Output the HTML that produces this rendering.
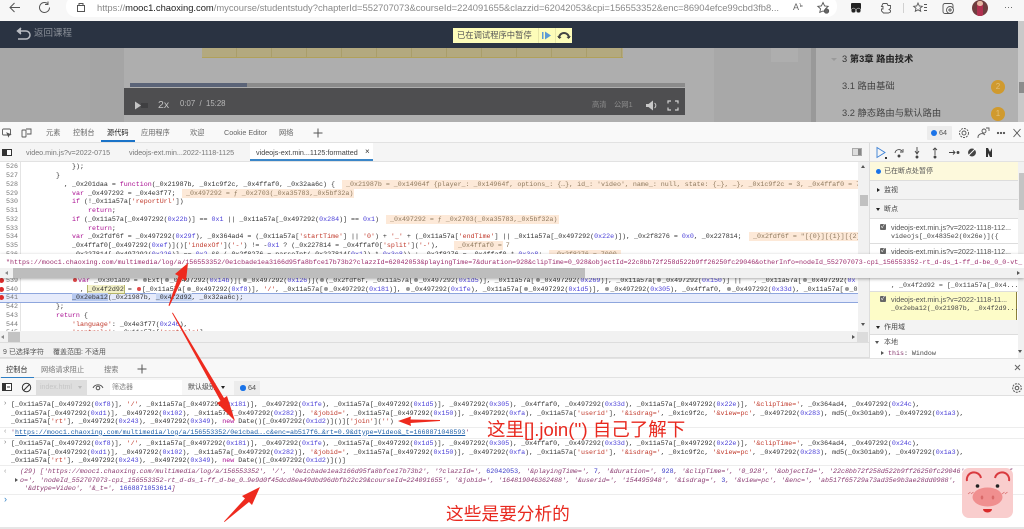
<!DOCTYPE html>
<html lang="zh">
<head>
<meta charset="utf-8">
<title>DevTools</title>
<style>
html,body{margin:0;padding:0;width:1024px;height:529px;overflow:hidden;background:#fff}
body{position:relative;font-family:"Liberation Sans","Noto Sans CJK SC",sans-serif;color:#444}
.a{position:absolute}
.t{position:absolute;white-space:pre;line-height:1}
.m{font-family:"Liberation Mono","Noto Sans CJK SC",monospace;font-size:6.65px;color:#333}
#wrap{position:absolute;left:0;top:0;width:1024px;height:529px;filter:blur(.3px)}
.l{position:absolute;left:0;width:858px;height:9px;line-height:9px;white-space:pre;overflow:hidden;font-family:"Liberation Mono","Noto Sans CJK SC",monospace;font-size:6.65px;color:#333}
.l span.c{position:absolute;top:0}
.num{position:absolute;left:0;width:18px;text-align:right;color:#777;font-family:"Liberation Mono",monospace;font-size:6.65px;height:9px;line-height:9px}
i{font-style:normal}
.k{color:#a90d91}.s{color:#c0392b}.n{color:#4a3fd8}
.v{position:absolute;top:0;background:#fde9d8;color:#8f7a5f;height:9px;white-space:pre}
.d{display:inline-block;width:4px;height:4px;border-radius:50%;background:#999;vertical-align:0;margin:0 1px}
.r{background:#e04a4a}
.bp{position:absolute;left:-1px;width:5px;height:5px;border-radius:50%;background:#dd2c2c}
.cl{position:absolute;left:11px;height:9px;line-height:9px;white-space:pre;font-family:"Liberation Mono",monospace;font-size:6.65px;color:#333;width:1013px;overflow:hidden}
.it{font-style:italic;color:#8a3a70}
.it .n{color:#3a3ac8}
.sbt{position:absolute;left:870px;width:148px;font-size:7px;color:#444;box-sizing:border-box;border-bottom:1px solid #ddd}
.cb{position:absolute;left:880px;width:6px;height:6px;background:#666;border-radius:1px;color:#fff;font-size:6px;line-height:6px;text-align:center}
.st{position:absolute;left:891px;width:126px;overflow:hidden;white-space:pre;font-size:7.2px;color:#555;height:9px;line-height:9px}
.sm{font-family:"Liberation Mono",monospace;font-size:6.65px;color:#444}
.tab{position:absolute;font-size:7.2px;color:#666;white-space:pre;line-height:1}
</style>
</head>
<body>
<div id="wrap">

<!-- browser chrome -->
<div class="a" style="left:0;top:0;width:1024px;height:21px;background:#f7f7f7"></div>
<div class="a" style="left:66px;top:-4px;width:771px;height:21px;background:#fff;border-radius:10px"></div>
<svg class="a" style="left:0;top:0" width="90" height="20" fill="none" stroke="#555" stroke-width="1">
  <path d="M20 7.5H10.5M14.5 3L10 7.5l4.500 4.500"/>
  <path d="M49.500 7.500a5 5 0 1 1-2-4"/><path d="M48 1.500v3h-3"/>
  <rect x="77.500" y="5.500" width="7" height="6"/><path d="M79 5.500v-2h4v2"/>
</svg>
<div class="t" style="left:97px;top:2px;font-size:9.4px;color:#888;width:690px;overflow:hidden;line-height:11px">https://<span style="color:#222">mooc1.chaoxing.com</span>/mycourse/studentstudy?chapterId=552707073&amp;courseId=224091655&amp;clazzid=62042053&amp;cpi=156553352&amp;enc=86904efce99cbd3fb8...</div>
<div class="t" style="left:793px;top:3px;font-size:9px;color:#666">A<span style="font-size:6px;vertical-align:3px">ъ</span></div>
<svg class="a" style="left:815px;top:0" width="160" height="20" fill="none" stroke="#555" stroke-width=".9">
  <path d="M8 2.500l1.600 3.400 3.600.4-2.700 2.500.7 3.600L8 11l-3.200 1.400.7-3.600L2.800 6.300l3.600-.4z"/>
  <circle cx="11.500" cy="11" r="2.200" fill="#666"/>
  <rect x="36" y="3" width="10" height="7" rx="1" fill="#222" stroke="none"/><circle cx="38.500" cy="10.500" r="2.400" fill="#222" stroke="#fff" stroke-width=".5"/><circle cx="43.500" cy="10.500" r="2.400" fill="#222" stroke="#fff" stroke-width=".5"/>
  <path d="M68 3.500h4l1 2h2.500v3l-1.500 1 1.500 1v1.500l-2 1h-5l-2-2v-2h1.500v-2.500h-1.500z"/>
  <path d="M88.500 3v10" stroke="#ccc"/>
  <path d="M103 3l1.300 3 3 .3-2.300 2 .7 3-2.700-1.500-2.700 1.500.7-3-2.300-2 3-.3z"/><path d="M109 4.500h3M109 7.500h3M109 10.500h3"/>
  <rect x="128" y="3.500" width="10" height="10" rx="2"/><circle cx="135" cy="10" r="3.500" fill="#f7f7f7"/><path d="M135 8v4M133 10h4"/>
</svg>
<div class="a" style="left:972px;top:0;width:16px;height:16px;border-radius:50%;background:#6f3d3f;overflow:hidden"><div class="a" style="left:5px;top:3px;width:6px;height:13px;background:#b03050"></div><div class="a" style="left:5px;top:1px;width:6px;height:5px;border-radius:3px;background:#e6b9a5"></div></div>
<div class="t" style="left:1004px;top:3px;font-size:9px;color:#555">···</div>

<!-- dim page -->
<div class="a" style="left:0;top:21px;width:1024px;height:101px;background:#a9a9a9"></div>
<div class="a" style="left:0;top:21px;width:1018px;height:27px;background:#2a3342"></div>
<div class="a" style="left:1018px;top:21px;width:6px;height:101px;background:#c9c9c9"></div>
<div class="a" style="left:1019px;top:82px;width:5px;height:11px;background:#8c8c8c"></div>
<svg class="a" style="left:15px;top:27px" width="16" height="14" fill="none" stroke="#b9bcc2" stroke-width="1.500"><path d="M5 4h6a3.500 3.500 0 0 1 0 8H3"/><path d="M6 1L2.500 4 6 7" fill="#b9bcc2"/></svg>
<div class="t" style="left:34px;top:29px;font-size:9.500px;color:#8a8f98">返回课程</div>
<div class="a" style="left:453px;top:28px;width:119px;height:14.500px;background:#fdfcb9"></div>
<div class="t" style="left:457px;top:31px;font-size:8.300px;color:#555">已在调试程序中暂停</div>
<svg class="a" style="left:538px;top:28px" width="34" height="15"><path d="M.5 0v15M17.500 0v15" stroke="#e8e6a8"/><rect x="4" y="4" width="1.500" height="7" fill="#5b9bd5"/><path d="M7 3.500L13 7.500 7 11.500z" fill="#5b9bd5"/><path d="M21 10a5 5 0 0 1 10 0" fill="none" stroke="#444" stroke-width="2"/><path d="M19 8l2.500 3 2-2zM33 8l-2.500 3-2-2z" fill="#444"/></svg>
<!-- page columns -->
<div class="a" style="left:90px;top:48px;width:34px;height:74px;background:#a5a5a5"></div>
<div class="a" style="left:0;top:48px;width:90px;height:74px;background:#a7a7a7"></div>
<div class="a" style="left:124px;top:48px;width:590px;height:74px;background:#aeaeae"></div>
<div class="a" style="left:714px;top:48px;width:98px;height:74px;background:#a8a8a8"></div>
<div class="a" style="left:771px;top:48px;width:27px;height:14px;background:#aeaeae"></div>
<div class="a" style="left:811px;top:48px;width:5px;height:74px;background:#999"></div>
<div class="a" style="left:816px;top:48px;width:202px;height:74px;background:#b1b1b1"></div>
<!-- gold strip -->
<div class="a" style="left:202px;top:48px;width:421px;height:10px;background:repeating-linear-gradient(90deg,#b3a97f 0 34px,#a99e6a 34px 35px);border-bottom:1px solid #b1a15a;box-sizing:border-box"></div>
<!-- video bar -->
<div class="a" style="left:130px;top:83px;width:555px;height:4px;background:#8b8b8b"></div>
<div class="a" style="left:130px;top:83px;width:117px;height:4px;background:#5b6478"></div>
<div class="a" style="left:124px;top:88px;width:561px;height:27px;background:#4e4e50"></div>
<svg class="a" style="left:134px;top:100px" width="16" height="11"><path d="M1 1.500L7 5.500 1 9.500z" fill="#c4c4c4"/><rect x="7" y="3" width="7" height="5" fill="#3f3f41"/></svg>
<div class="t" style="left:158px;top:100px;font-size:10.500px;color:#c4c4c4">2x</div>
<div class="t" style="left:180px;top:100px;font-size:7.800px;color:#b9b9b9">0:07  /  15:28</div>
<div class="t" style="left:592px;top:101px;font-size:7.300px;color:#8c8c8c">高清</div>
<div class="t" style="left:614px;top:101px;font-size:7.300px;color:#8c8c8c">公网1</div>
<svg class="a" style="left:645px;top:99px" width="26" height="13"><path d="M1 5h2.500L8 1.500v10L3.500 8H1z" fill="#c8c8c8"/><path d="M9.500 4a3 3 0 0 1 0 5" stroke="#c8c8c8" fill="none"/></svg>
<svg class="a" style="left:667px;top:100px" width="12" height="11" fill="none" stroke="#d0d0d0" stroke-width="1.200"><path d="M1 3.500V1h3M8 1h3v2.500M11 7.500V10H8M4 10H1V7.500"/></svg>
<!-- right list -->
<div class="a" style="left:831px;top:58px;border-left:3px solid transparent;border-right:3px solid transparent;border-top:3px solid #9a9a9a"></div>
<div class="t" style="left:842px;top:55px;font-size:9.300px;color:#333">3 <b style="color:#222">第3章 路由技术</b></div>
<div class="t" style="left:842px;top:82px;font-size:9.300px;color:#444">3.1 路由基础</div>
<div class="t" style="left:842px;top:109px;font-size:9.300px;color:#444">3.2 静态路由与默认路由</div>
<div class="a" style="left:991px;top:80px;width:14px;height:14px;border-radius:50%;background:#d09a2e;color:#e3c078;font-size:8px;line-height:14px;text-align:center">2</div>
<div class="a" style="left:991px;top:107px;width:14px;height:14px;border-radius:50%;background:#d09a2e;color:#e3c078;font-size:8px;line-height:14px;text-align:center">1</div>

<!-- devtools top tabs -->
<div class="a" style="left:0;top:122px;width:1024px;height:21px;background:#f9f9f9;border-bottom:1px solid #e2e2e2;box-sizing:border-box"></div>
<svg class="a" style="left:2px;top:127px" width="30" height="12" fill="none" stroke="#555" stroke-width=".9"><rect x=".5" y="2" width="8" height="6" rx="1"/><path d="M5 6l3.500 1.500-1.500.5-.5 1.500z" fill="#555"/><rect x="20" y="3" width="4" height="7" rx=".5"/><path d="M24 2h5v5h-4"/></svg>
<div class="tab" style="left:46px;top:129px">元素</div>
<div class="tab" style="left:73px;top:129px">控制台</div>
<div class="tab" style="left:107px;top:129px;color:#222">源代码</div>
<div class="a" style="left:101px;top:140px;width:34px;height:2px;background:#1a73c8"></div>
<div class="tab" style="left:141px;top:129px">应用程序</div>
<div class="tab" style="left:190px;top:129px">欢迎</div>
<div class="tab" style="left:224px;top:129px">Cookie Editor</div>
<div class="tab" style="left:279px;top:129px">网络</div>
<svg class="a" style="left:312px;top:127px" width="12" height="12"><path d="M6 1.500v9M1.500 6h9" stroke="#555"/></svg>
<div class="a" style="left:927px;top:126px;width:25px;height:14px;background:#ececec;border-radius:1px"></div>
<div class="a" style="left:931px;top:130px;width:6px;height:6px;border-radius:50%;background:#1a73e8"></div>
<div class="tab" style="left:939px;top:129px;color:#555">64</div>
<svg class="a" style="left:956px;top:125px" width="68" height="16" fill="none" stroke="#555" stroke-width=".9"><circle cx="8" cy="8" r="2"/><circle cx="8" cy="8" r="4.500" stroke-dasharray="2 1"/><circle cx="28" cy="6" r="2"/><path d="M22 13a4 4 0 0 1 7-3M30 3h3v3"/><circle cx="42" cy="8" r=".7" fill="#555"/><circle cx="45" cy="8" r=".7" fill="#555"/><circle cx="48" cy="8" r=".7" fill="#555"/><path d="M57.500 4l7 8M64.500 4l-7 8"/></svg>

<!-- source tabs -->
<div class="a" style="left:0;top:143px;width:1024px;height:19px;background:#f5f5f5;border-bottom:1px solid #e2e2e2;box-sizing:border-box"></div>
<div class="a" style="left:2px;top:149px;width:10px;height:7px;background:#333;border:1px solid #333;box-sizing:border-box"><div class="a" style="left:4px;top:0;width:4px;height:5px;background:#fff"></div></div>
<div class="tab" style="left:26px;top:149px;color:#777">video.min.js?v=2022-0715</div>
<div class="tab" style="left:129px;top:149px;color:#777">videojs-ext.min...2022-1118-1125</div>
<div class="a" style="left:250px;top:143px;width:123px;height:18px;background:#fff;border-bottom:2px solid #3b86c8;box-sizing:border-box"></div>
<div class="tab" style="left:256px;top:149px;color:#444">videojs-ext.min...1125:formatted</div>
<div class="tab" style="left:365px;top:148px;font-size:8px;color:#333">×</div>
<svg class="a" style="left:852px;top:148px" width="12" height="9"><rect x=".5" y=".5" width="9" height="7" fill="#ddd" stroke="#aaa"/><rect x="6" y="1" width="3" height="6" fill="#888"/></svg>
<svg class="a" style="left:875px;top:145px" width="145" height="15" fill="none" stroke="#444" stroke-width=".9">
  <path d="M2 2.500l8 5-8 5z" stroke="#3a7fd5"/><rect x="10" y="12" width="2" height="2" fill="#333" stroke="none"/>
  <path d="M20 8a4 4 0 0 1 7-2M28 4v3h-3"/><circle cx="24" cy="11" r="1" fill="#444"/>
  <path d="M42 2v7M40 6l2 3 2-3"/><circle cx="42" cy="12" r="1" fill="#444"/>
  <path d="M60 10V3M58 5l2-2 2 2"/><circle cx="60" cy="12" r="1" fill="#444"/>
  <path d="M74 7.500h6M78 5.500l2 2-2 2"/><circle cx="83" cy="7.500" r="1" fill="#444"/>
  <circle cx="97" cy="7.500" r="3.500" fill="#444"/><path d="M93 11l8-8" stroke="#fff"/>
  <path d="M111 3h2l2 4 2-4v9h-2l-2-4v4h-2z" fill="#333" stroke="none"/>
</svg>
<div class="a" style="left:869px;top:143px;width:1px;height:215px;background:#ddd"></div>

<!-- code -->
<div class="a" style="left:0;top:162px;width:858px;height:170px;background:#fff"></div>
<div class="a" style="left:20px;top:162px;width:1px;height:170px;background:#e4e4e4"></div>
<div class="a" style="left:0;top:293px;width:858px;height:10px;background:#e6ebfb;border-top:1px solid #8ea6dd;border-bottom:1px solid #8ea6dd;box-sizing:border-box"></div>

<div class="num" style="top:162px">526</div><div class="l" style="top:162px"><span class="c" style="left:72px">});</span></div>
<div class="num" style="top:171px">527</div><div class="l" style="top:171px"><span class="c" style="left:56px">}</span></div>
<div class="num" style="top:180px">528</div><div class="l" style="top:180px"><span class="c" style="left:64px">, _0x201daa = <i class="k">function</i>(_0x21987b, _0x1c9f2c, _0x4ffaf0, _0x32aa6c) {</span><span class="v" style="left:342px;width:516px"> _0x21987b = _0x14964f {player_: _0x14964f, options_: {…}, id_: 'video', name_: null, state: {…}, …}, _0x1c9f2c = 3, _0x4ffaf0 = 7</span></div>
<div class="num" style="top:188.500px">529</div><div class="l" style="top:188.500px"><span class="c" style="left:72px"><i class="k">var</i> _0x497292 = _0x4e3f77;</span><span class="v" style="left:182px;width:172px"> _0x497292 = ƒ _0x2703(_0xa35783,_0x5bf32a)</span></div>
<div class="num" style="top:197px">530</div><div class="l" style="top:197px"><span class="c" style="left:72px"><i class="k">if</i> (!_0x11a57a[<i class="s">'reportUrl'</i>])</span></div>
<div class="num" style="top:206px">531</div><div class="l" style="top:206px"><span class="c" style="left:88px"><i class="k">return</i>;</span></div>
<div class="num" style="top:214.500px">532</div><div class="l" style="top:214.500px"><span class="c" style="left:72px"><i class="k">if</i> (_0x11a57a[_0x497292(<i class="n">0x22b</i>)] == <i class="n">0x1</i> || _0x11a57a[_0x497292(<i class="n">0x284</i>)] == <i class="n">0x1</i>)</span><span class="v" style="left:386px;width:173px"> _0x497292 = ƒ _0x2703(_0xa35783,_0x5bf32a)</span></div>
<div class="num" style="top:223.500px">533</div><div class="l" style="top:223.500px"><span class="c" style="left:88px"><i class="k">return</i>;</span></div>
<div class="num" style="top:232px">534</div><div class="l" style="top:232px"><span class="c" style="left:72px"><i class="k">var</i> _0x2fdf6f = _0x497292(<i class="n">0x29f</i>), _0x364ad4 = (_0x11a57a[<i class="s">'startTime'</i>] || <i class="s">'0'</i>) + <i class="s">'_'</i> + (_0x11a57a[<i class="s">'endTime'</i>] || _0x11a57a[_0x497292(<i class="n">0x22e</i>)]), _0x2f8276 = <i class="n">0x0</i>, _0x227814;</span><span class="v" style="left:749px;width:109px"> _0x2fdf6f = "[{0}][{1}][{2}]</span></div>
<div class="num" style="top:240.500px">535</div><div class="l" style="top:240.500px"><span class="c" style="left:72px">_0x4ffaf0[_0x497292(<i class="n">0xef</i>)]()[<i class="s">'indexOf'</i>](<i class="s">'-'</i>) != -<i class="n">0x1</i> ? (_0x227814 = _0x4ffaf0[<i class="s">'split'</i>](<i class="s">'-'</i>),</span><span class="v" style="left:454px;width:49px"> _0x4ffaf0 = 7</span></div>
<div class="num" style="top:249.500px">536</div><div class="l" style="top:249.500px"><span class="c" style="left:72px">_0x227814[_0x497292(<i class="n">0x226</i>)] == <i class="n">0x2</i> &amp;&amp; (_0x2f8276 = parseInt(_0x227814[<i class="n">0x1</i>]) * <i class="n">0x3e8</i>)) : _0x2f8276 = _0x4ffaf0 * <i class="n">0x3e8</i>;</span><span class="v" style="left:549px;width:72px"> _0x2f8276 = 7000</span></div>
<div class="num" style="top:275.500px">539</div><div class="bp" style="top:277.500px"></div><div class="l" style="top:275.500px"><span class="c" style="left:72px"><span class="d r"></span><i class="k">var</i> _0x301ab9 = <span class="d"></span>Ext[<span class="d"></span>_0x497292(<i class="n">0x14b</i>)][<span class="d"></span>_0x497292(<i class="n">0x126</i>)](<span class="d"></span>(_0x2fdf6f, _0x11a57a[<span class="d"></span>_0x497292(<i class="n">0x1d5</i>)], _0x11a57a[<span class="d"></span>_0x497292(<i class="n">0x269</i>)], _0x11a57a[<span class="d"></span>_0x497292(<i class="n">0x150</i>)] ||   , _0x11a57a[<span class="d"></span>_0x497292(<i class="n">0x</i></span></div>
<div class="num" style="top:284.500px">540</div><div class="bp" style="top:286.500px"></div><div class="l" style="top:284.500px"><span class="c" style="left:80px">, <span style="background:#f3f1c8;outline:.5px solid #b5b56a">_0x4f2d92</span> = <span class="d r"></span>[_0x11a57a[<span class="d"></span>_0x497292(<i class="n">0xf8</i>)], <i class="s">'/'</i>, _0x11a57a[<span class="d"></span>_0x497292(<i class="n">0x181</i>)], <span class="d"></span>_0x497292(<i class="n">0x1fe</i>), _0x11a57a[<span class="d"></span>_0x497292(<i class="n">0x1d5</i>)], <span class="d"></span>_0x497292(<i class="n">0x305</i>), _0x4ffaf0, <span class="d"></span>_0x497292(<i class="n">0x33d</i>), _0x11a57a[<span class="d"></span>_0x497292</span></div>
<div class="num" style="top:293px">541</div><div class="bp" style="top:295px"></div><div class="l" style="top:293px"><span class="c" style="left:72px"><span style="background:#b7c9ef">_0x2eba12</span>(_0x21987b, <span style="background:#c9d7f3">_0x4f2d92</span>, _0x32aa6c);</span></div>
<div class="num" style="top:301.500px">542</div><div class="l" style="top:301.500px"><span class="c" style="left:56px">};</span></div>
<div class="num" style="top:310.500px">543</div><div class="l" style="top:310.500px"><span class="c" style="left:56px"><i class="k">return</i> {</span></div>
<div class="num" style="top:319.500px">544</div><div class="l" style="top:319.500px"><span class="c" style="left:72px"><i class="s">'language'</i>: _0x4e3f77(<i class="n">0x246</i>),</span></div>
<div class="num" style="top:327.500px;height:4px;overflow:hidden">545</div><div class="l" style="top:327.500px;height:4px"><span class="c" style="left:72px"><i class="s">'controls'</i>: _0x11a57a[<i class="s">'controls'</i>]</span></div>

<!-- editor scrollbars -->
<div class="a" style="left:858px;top:162px;width:11px;height:170px;background:#f1f1f1"></div>
<div class="a" style="left:860px;top:195px;width:8px;height:11px;background:#c1c1c1"></div>
<div class="a" style="left:861px;top:165px;border-left:2.500px solid transparent;border-right:2.500px solid transparent;border-bottom:3px solid #555"></div>
<div class="a" style="left:861px;top:323px;border-left:2.500px solid transparent;border-right:2.500px solid transparent;border-top:3px solid #555"></div>
<div class="a" style="left:0;top:331px;width:869px;height:11px;background:#f1f1f1"></div>
<div class="a" style="left:8px;top:332px;width:12px;height:10px;background:#c3c3c3"></div>
<div class="a" style="left:857px;top:332px;width:11px;height:10px;background:#dcdcdc"></div>
<div class="a" style="left:1px;top:335px;border-top:2px solid transparent;border-bottom:2px solid transparent;border-right:3px solid #888"></div>
<div class="a" style="left:852px;top:335px;border-top:2px solid transparent;border-bottom:2px solid transparent;border-left:3px solid #555"></div>

<!-- status bar -->
<div class="a" style="left:0;top:342px;width:869px;height:16px;background:#f1f1f1;border-top:1px solid #ddd;border-bottom:1px solid #ddd;box-sizing:border-box"></div>
<div class="t" style="left:3px;top:349px;font-size:7px;color:#555">9 已选择字符</div>
<div class="t" style="left:53px;top:349px;font-size:7px;color:#555">覆盖范围: 不适用</div>

<!-- sidebar -->
<div class="a" style="left:870px;top:162px;width:148px;height:196px;background:#fff"></div>
<div class="a" style="left:1018px;top:162px;width:6px;height:196px;background:#f1f1f1"></div>
<div class="a" style="left:1019px;top:173px;width:5px;height:37px;background:#c4c4c4"></div>
<div class="sbt" style="top:162px;height:19px;background:#fdf9dc"><div class="a" style="left:6px;top:7px;width:5px;height:5px;border-radius:50%;background:#1a73e8"></div><div class="t" style="left:14px;top:6px;font-size:7px;color:#555">已在断点处暂停</div></div>
<div class="sbt" style="top:181px;height:19px;background:#f3f3f3"><div class="a" style="left:7px;top:7px;border-top:2.500px solid transparent;border-bottom:2.500px solid transparent;border-left:3.500px solid #222"></div><div class="t" style="left:14px;top:6px;font-size:7px">监视</div></div>
<div class="sbt" style="top:200px;height:19px;background:#f3f3f3"><div class="a" style="left:6px;top:8px;border-left:2.500px solid transparent;border-right:2.500px solid transparent;border-top:3.500px solid #222"></div><div class="t" style="left:14px;top:6px;font-size:7px">断点</div></div>
<div class="a" style="left:870px;top:243px;width:148px;height:1px;background:#ddd"></div>
<div class="cb" style="top:224px">✓</div>
<div class="st" style="top:223px">videojs-ext.min.js?v=2022-1118-112...</div>
<div class="st sm" style="top:232px">videojs[_0x4835e2(0x26e)]({</div>
<div class="cb" style="top:248px">✓</div>
<div class="st" style="top:247px">videojs-ext.min.js?v=2022-1118-112...</div>
<div class="st sm" style="top:281px">, _0x4f2d92 = [_0x11a57a[_0x4...</div>
<div class="a" style="left:870px;top:291px;width:148px;height:1px;background:#ddd"></div>
<div class="a" style="left:870px;top:292px;width:147px;height:28px;background:#fdfcc8;border-right:1px solid #8a7f3a;box-sizing:border-box"></div>
<div class="cb" style="top:296px">✓</div>
<div class="st" style="top:295px">videojs-ext.min.js?v=2022-1118-11...</div>
<div class="st sm" style="top:304px">_0x2eba12(_0x21987b, _0x4f2d9...</div>
<div class="sbt" style="top:320px;height:15px;background:#f3f3f3"><div class="a" style="left:6px;top:6px;border-left:2.500px solid transparent;border-right:2.500px solid transparent;border-top:3.500px solid #222"></div><div class="t" style="left:14px;top:4px;font-size:7px">作用域</div></div>
<div class="a" style="left:875px;top:341px;border-left:2.500px solid transparent;border-right:2.500px solid transparent;border-top:3px solid #555"></div>
<div class="t" style="left:884px;top:339px;font-size:7px;color:#555">本地</div>
<div class="a" style="left:881px;top:351px;border-top:2.500px solid transparent;border-bottom:2.500px solid transparent;border-left:3.500px solid #555"></div>
<div class="t sm" style="left:888px;top:349.500px"><span style="color:#8a3a70">this</span>: Window</div>
<div class="a" style="left:1018px;top:350px;font-size:0;border-left:2.500px solid transparent;border-right:2.500px solid transparent;border-top:3px solid #555"></div>

<!-- console tabs -->
<div class="a" style="left:0;top:358px;width:1024px;height:20px;background:#f8f8f8;border-top:1px solid #e2e2e2;border-bottom:1px solid #e2e2e2;box-sizing:border-box"></div>
<svg class="a" style="left:1012px;top:363px" width="12" height="9"><path d="M3 2l5 5M8 2l-5 5" stroke="#666"/></svg>
<div class="tab" style="left:6px;top:366px;color:#333">控制台</div>
<div class="a" style="left:1px;top:377px;width:33px;height:1.500px;background:#2f7fc5"></div>
<div class="tab" style="left:41px;top:366px;color:#777">网络请求阻止</div>
<div class="tab" style="left:104px;top:366px;color:#777">搜索</div>
<svg class="a" style="left:136px;top:363px" width="12" height="12"><path d="M6 1.500v9M1.500 6h9" stroke="#555"/></svg>

<!-- console toolbar -->
<div class="a" style="left:0;top:378px;width:1024px;height:18px;background:#f7f7f7;border-bottom:1px solid #e0e0e0;box-sizing:border-box"></div>
<svg class="a" style="left:2px;top:381px" width="30" height="13" fill="none" stroke="#333"><rect x=".5" y="2.500" width="9" height="7" fill="#fff"/><rect x=".5" y="2.500" width="3" height="7" fill="#333"/><path d="M5 6h3" stroke="#333"/><circle cx="24.500" cy="6.500" r="4.200"/><path d="M21.500 9.500l6-6"/></svg>
<div class="a" style="left:36px;top:380px;width:51px;height:15px;background:#dedede"></div>
<div class="t" style="left:40px;top:384px;font-size:7px;color:#c5c5c5">index.html</div>
<div class="a" style="left:78px;top:386px;border-left:2.500px solid transparent;border-right:2.500px solid transparent;border-top:3.500px solid #bbb"></div>
<svg class="a" style="left:92px;top:382px" width="13" height="11" fill="none" stroke="#444" stroke-width=".9"><path d="M1 6a5.500 5.500 0 0 1 10 0"/><circle cx="6" cy="6" r="1.800"/></svg>
<div class="a" style="left:110px;top:380px;width:72px;height:15px;background:#fff"></div>
<div class="t" style="left:112px;top:384px;font-size:7px;color:#888">筛选器</div>
<div class="t" style="left:188px;top:384px;font-size:7px;color:#444">默认级别</div>
<div class="a" style="left:221px;top:386px;border-left:2.500px solid transparent;border-right:2.500px solid transparent;border-top:3.500px solid #222"></div>
<div class="a" style="left:234px;top:381px;width:26px;height:14px;background:#ececec"></div>
<div class="a" style="left:240px;top:385px;width:5.500px;height:5.500px;border-radius:50%;background:#1a73e8"></div>
<div class="tab" style="left:248px;top:384px;color:#555">64</div>
<svg class="a" style="left:1011px;top:382px" width="12" height="12" fill="none" stroke="#555"><circle cx="6" cy="6" r="1.800"/><circle cx="6" cy="6" r="4.300" stroke-dasharray="2 1"/></svg>

<!-- console -->
<div class="a" style="left:0;top:396px;width:1024px;height:131px;background:#fff"></div>
<div class="a" style="left:0;top:427px;width:1024px;height:1px;background:#ededed"></div>
<div class="a" style="left:0;top:438px;width:1024px;height:1px;background:#ededed"></div>
<div class="a" style="left:0;top:465px;width:1024px;height:1px;background:#ededed"></div>
<div class="a" style="left:0;top:494px;width:1024px;height:1px;background:#ededed"></div>
<div class="a" style="left:0;top:527px;width:1024px;height:2px;background:#e6e6e6"></div>

<div class="t" style="left:4px;top:400px;font-size:7px;color:#777">›</div>
<div class="cl" style="top:400px">[_0x11a57a[_0x497292(<i class="n">0xf8</i>)], <i class="s">'/'</i>, _0x11a57a[_0x497292(<i class="n">0x181</i>)], _0x497292(<i class="n">0x1fe</i>), _0x11a57a[_0x497292(<i class="n">0x1d5</i>)], _0x497292(<i class="n">0x305</i>), _0x4ffaf0, _0x497292(<i class="n">0x33d</i>), _0x11a57a[_0x497292(<i class="n">0x22e</i>)], <i class="s">'&amp;clipTime='</i>, _0x364ad4, _0x497292(<i class="n">0x24c</i>),</div>
<div class="cl" style="top:408.500px">_0x11a57a[_0x497292(<i class="n">0xd1</i>)], _0x497292(<i class="n">0x102</i>), _0x11a57a[_0x497292(<i class="n">0x282</i>)], <i class="s">'&amp;jobid='</i>, _0x11a57a[_0x497292(<i class="n">0x150</i>)], _0x497292(<i class="n">0xfa</i>), _0x11a57a[<i class="s">'userid'</i>], <i class="s">'&amp;isdrag='</i>, _0x1c9f2c, <i class="s">'&amp;view=pc'</i>, _0x497292(<i class="n">0x283</i>), md5(_0x301ab9), _0x497292(<i class="n">0x1a3</i>),</div>
<div class="cl" style="top:417px">_0x11a57a[<i class="s">'rt'</i>], _0x497292(<i class="n">0x243</i>), _0x497292(<i class="n">0x349</i>), <i class="k">new</i> Date()[_0x497292(<i class="n">0x1d2</i>)]()][<i class="s">'join'</i>](<i class="s">''</i>)</div>
<div class="t" style="left:4px;top:428px;font-size:7px;color:#999">‹</div>
<div class="cl" style="top:427.500px;color:#333"><span style="color:#8a3a70">'</span><span style="color:#1e5fa8;text-decoration:underline">https://mooc1.chaoxing.com/multimedia/log/a/156553352/0e1cbad….c&amp;enc=ab517f6…&amp;rt=0.9&amp;dtype=Video&amp;_t=1668871048593</span><span style="color:#8a3a70">'</span></div>

<div class="t" style="left:4px;top:439px;font-size:7px;color:#777">›</div>
<div class="cl" style="top:439px">[_0x11a57a[_0x497292(<i class="n">0xf8</i>)], <i class="s">'/'</i>, _0x11a57a[_0x497292(<i class="n">0x181</i>)], _0x497292(<i class="n">0x1fe</i>), _0x11a57a[_0x497292(<i class="n">0x1d5</i>)], _0x497292(<i class="n">0x305</i>), _0x4ffaf0, _0x497292(<i class="n">0x33d</i>), _0x11a57a[_0x497292(<i class="n">0x22e</i>)], <i class="s">'&amp;clipTime='</i>, _0x364ad4, _0x497292(<i class="n">0x24c</i>),</div>
<div class="cl" style="top:447.500px">_0x11a57a[_0x497292(<i class="n">0xd1</i>)], _0x497292(<i class="n">0x102</i>), _0x11a57a[_0x497292(<i class="n">0x282</i>)], <i class="s">'&amp;jobid='</i>, _0x11a57a[_0x497292(<i class="n">0x150</i>)], _0x497292(<i class="n">0xfa</i>), _0x11a57a[<i class="s">'userid'</i>], <i class="s">'&amp;isdrag='</i>, _0x1c9f2c, <i class="s">'&amp;view=pc'</i>, _0x497292(<i class="n">0x283</i>), md5(_0x301ab9), _0x497292(<i class="n">0x1a3</i>),</div>
<div class="cl" style="top:456px">_0x11a57a[<i class="s">'rt'</i>], _0x497292(<i class="n">0x243</i>), _0x497292(<i class="n">0x349</i>), <i class="k">new</i> Date()[_0x497292(<i class="n">0x1d2</i>)]()]</div>

<div class="t" style="left:4px;top:468px;font-size:7px;color:#999">‹</div>
<div class="cl it" style="top:466.500px;left:20px">(29) ['https://mooc1.chaoxing.com/multimedia/log/a/156553352', '/', '0e1cbade1ea3166d95fa8bfce17b73b2', '?clazzId=', <i class="n">62042053</i>, '&amp;playingTime=', <i class="n">7</i>, '&amp;duration=', <i class="n">928</i>, '&amp;clipTime=', '0_928', '&amp;objectId=', '22c8bb72f258d522b9ff26250fc29046', '&amp;otherInf</div>
<div class="a" style="left:15px;top:478px;border-top:2.500px solid transparent;border-bottom:2.500px solid transparent;border-left:3.500px solid #555"></div>
<div class="cl it" style="top:475.500px;left:20px">o=', 'nodeId_552707073-cpi_156553352-rt_d-ds_1-ff_d-be_0…9e9d0f45dcd8ea49dbd96dbfb22c29&amp;courseId=224091655', '&amp;jobid=', '164819046362488', '&amp;userid=', '154495948', '&amp;isdrag=', <i class="n">3</i>, '&amp;view=pc', '&amp;enc=', 'ab517f65729a73ad35e9b3ae28dd0988',</div>
<div class="cl it" style="top:484px;left:24px">'&amp;dtype=Video', '&amp;_t=', <i class="n">1668871053614</i>]</div>
<div class="t" style="left:4px;top:495px;font-size:9px;color:#2f7fc5">›</div>

<!-- tooltip -->
<div class="a" style="left:0;top:254px;width:1024px;height:24px;background:#fff;box-shadow:0 1px 3px rgba(0,0,0,.35)"></div>
<div class="t m" style="left:6px;top:258px;line-height:8px;color:#9b2c6c;width:1018px;overflow:hidden">"https://mooc1.chaoxing.com/multimedia/log/a/156553352/0e1cbade1ea3166d95fa8bfce17b73b2?clazzId=62042053&amp;playingTime=7&amp;duration=928&amp;clipTime=0_928&amp;objectId=22c8bb72f258d522b9ff26250fc29046&amp;otherInfo=nodeId_552707073-cpi_156553352-rt_d-ds_1-ff_d-be_0_0-vt_</div>
<div class="a" style="left:0;top:268px;width:1024px;height:10px;background:#f1f1f1"></div>
<div class="a" style="left:13px;top:268px;width:572px;height:10px;background:#bdbdbd"></div>
<div class="a" style="left:5px;top:271px;border-top:2px solid transparent;border-bottom:2px solid transparent;border-right:3px solid #888"></div>
<div class="a" style="left:1017px;top:271px;border-top:2px solid transparent;border-bottom:2px solid transparent;border-left:3px solid #555"></div>

<!-- annotations -->
<svg class="a" style="left:0;top:0" width="1024" height="529">
  <g fill="#ee2a1e">
    <path d="M188 263L186 281 182.500 278.500 169.500 306 168.500 305.500 178.500 276 175 274z"/>
    <path d="M172 313L172.800 312.600 224 398 227 396 235 421 217 403 220.500 401z"/>
    <path d="M398 421L411 416.500 410.500 419.500 440 420 440 421 410.500 423 411 426z"/>
    <path d="M260 487L252 505 249 502 224.500 522 224 521.500 245 498.500 242 496z"/>
  </g>
</svg>
<div class="t" style="left:487px;top:420px;font-size:18.500px;color:#e8291f;line-height:20px">这里[].join('') 自己了解下</div>
<div class="t" style="left:446px;top:504px;font-size:17.700px;color:#e8291f;line-height:20px">这些是要分析的</div>

<!-- pig -->
<svg class="a" style="left:962px;top:468px" width="51" height="50">
  <rect x="0" y="0" width="51" height="50" rx="7" fill="#f9cdcd"/>
  <path d="M5 13a7 7 0 0 1 14-3" fill="none" stroke="#d93a3f" stroke-width="2"/>
  <path d="M33 10a7 7 0 0 1 14 3" fill="none" stroke="#d93a3f" stroke-width="2"/>
  <circle cx="15.500" cy="18" r="1.800" fill="#222"/><circle cx="35.500" cy="18" r="1.800" fill="#222"/>
  <ellipse cx="25.500" cy="29" rx="15" ry="9.500" fill="#f08f8f"/>
  <ellipse cx="20" cy="29.500" rx="1.300" ry="2" fill="#d96a6a"/><ellipse cx="31" cy="29.500" rx="1.300" ry="2" fill="#d96a6a"/>
  <path d="M21 41h9a4.500 3.500 0 0 1-9 0z" fill="#d92a2a"/>
  <path d="M6 26l2.500-2M9 26l2.500-2M40 26l2.500-2M43 26l2.500-2" stroke="#d96a6a" stroke-width=".8"/>
</svg>

</div>
</body>
</html>
